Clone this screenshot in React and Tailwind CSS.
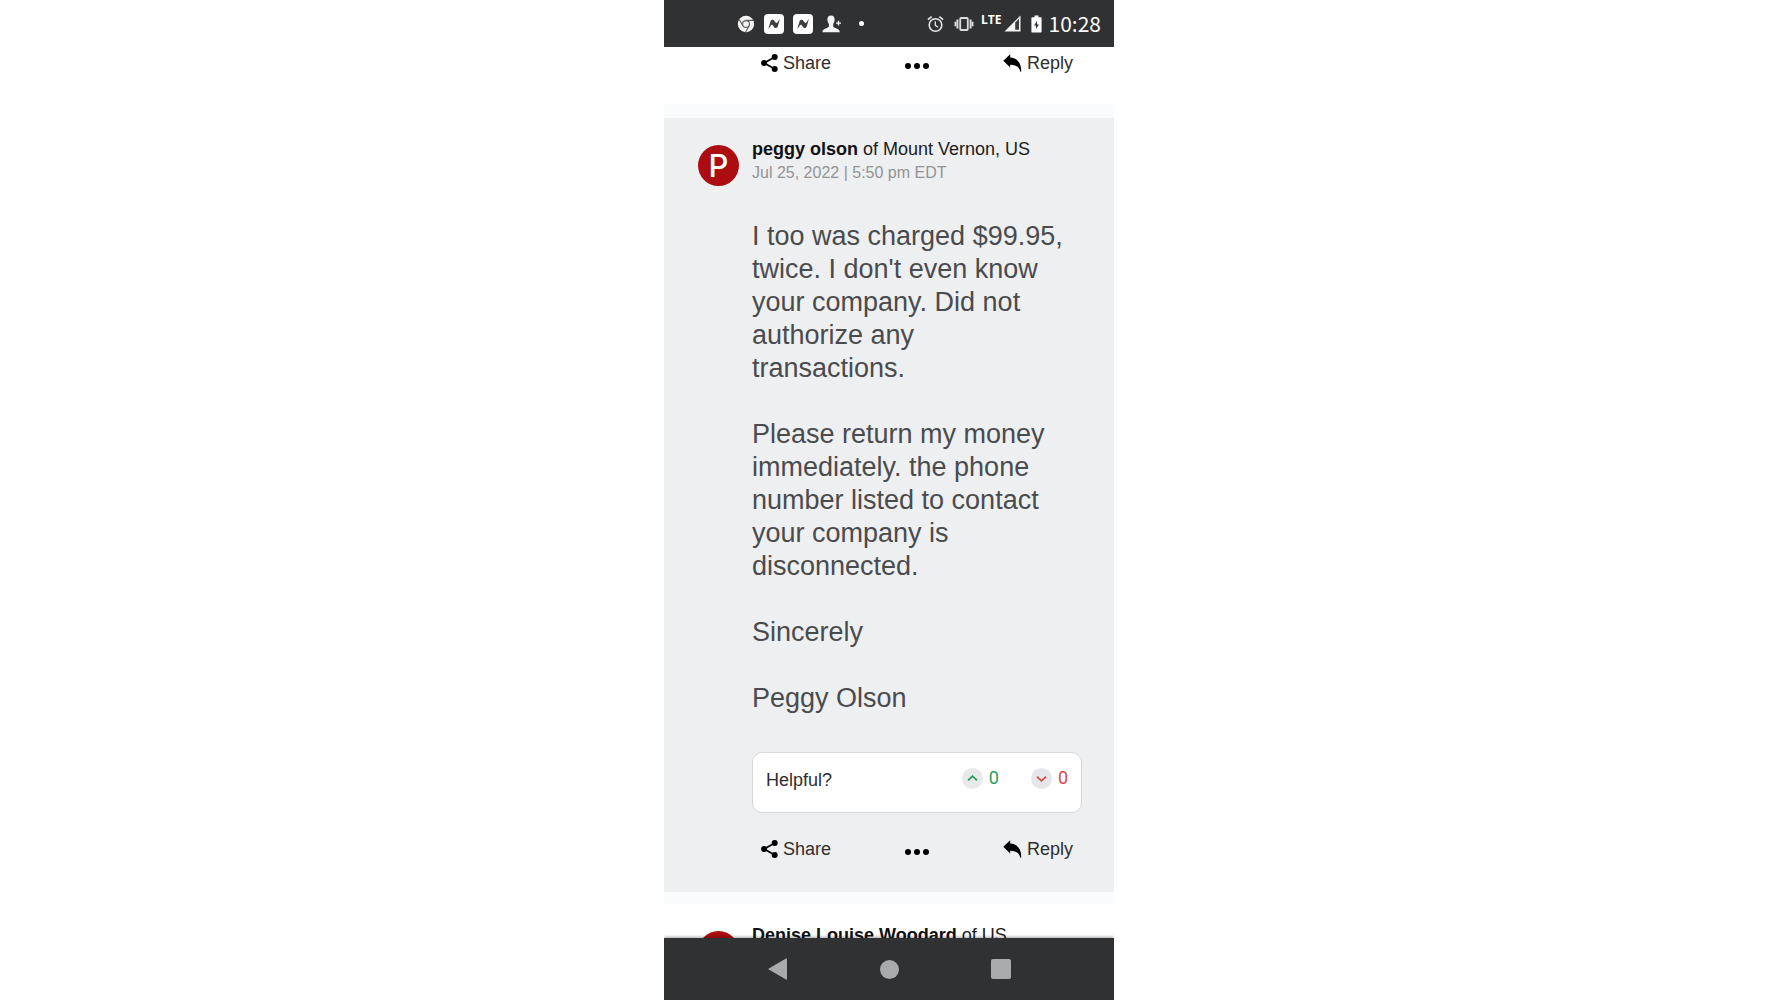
import { useState } from "react";

const comment = {
  name: "peggy olson",
  place: "of Mount Vernon, US",
  date: "Jul 25, 2022 | 5:50 pm EDT",
  paragraphs: [
    "I too was charged $99.95, twice. I don't even know your company. Did not authorize any transactions.",
    "Please return my money immediately. the phone number listed to contact your company is disconnected.",
    "Sincerely",
    "Peggy Olson",
  ],
};

function ChromeIcon() {
  return (
    <svg width="18" height="18" viewBox="0 0 18 18" aria-hidden="true">
      <circle cx="9" cy="9" r="8.2" fill="#f4f4f4" />
      <circle cx="9" cy="9" r="3.4" fill="#f4f4f4" stroke="#5c5d5f" strokeWidth="1.1" />
      <path d="M9 5.4H16.4M5.9 10.8L2.3 4.6M12.1 10.8L8.6 17" stroke="#5c5d5f" strokeWidth="1.1" fill="none" />
    </svg>
  );
}

function NewsIcon() {
  return (
    <svg width="20" height="20" viewBox="0 0 20 20" aria-hidden="true">
      <rect width="20" height="20" rx="4" fill="#fff" />
      <path d="M4.2 15L6.6 7.2C7 5.8 8.6 5.2 9.8 6.2L11.6 8.6C12.6 9.4 13.4 8.6 14 7.4L15.9 4.8L13.8 12.2C13.4 13.8 11.6 14.6 10.4 13.4L8.8 11.2C7.8 10.4 7 11.2 6.4 12.2Z" fill="#3b3c3e" />
    </svg>
  );
}

function PersonAddIcon() {
  return (
    <svg width="20" height="18" viewBox="0 0 20 18" fill="#f4f4f4" aria-hidden="true">
      <path d="M9 0.5C11.6 0.5 12.8 2.3 12.6 4.8C12.5 7 11.7 8.2 11.2 9V11.6C11.4 13.2 17.6 13.2 17.8 17.3H0.4C0.6 13.2 6.7 13.2 6.9 11.6V9C6.3 8.2 5.5 7 5.4 4.8C5.2 2.3 6.4 0.5 9 0.5Z" />
      <path d="M15.8 5.8H17.2V7.4H19V8.8H17.2V10.4H15.8V8.8H14V7.4H15.8Z" />
    </svg>
  );
}

function AlarmIcon() {
  return (
    <svg width="17" height="18" viewBox="0 0 17 18" fill="none" stroke="#e6e6e6" aria-hidden="true">
      <circle cx="8.5" cy="10" r="6.3" strokeWidth="1.6" />
      <path d="M8.3 6.2V10.4L11.2 12.2" strokeWidth="1.3" />
      <path d="M0.9 4.7L4.6 1.6M16.1 4.7L12.4 1.6" strokeWidth="1.7" />
    </svg>
  );
}

function VibrateIcon() {
  return (
    <svg width="20" height="14" viewBox="0 0 20 14" fill="none" stroke="#dcdcdc" aria-hidden="true">
      <rect x="6.2" y="1" width="7.6" height="12" rx="1" strokeWidth="1.8" />
      <path d="M3.4 2.6V11.4M16.6 2.6V11.4" strokeWidth="2" />
      <path d="M1.4 4.8V9.2M18.6 4.8V9.2" strokeWidth="1.8" />
    </svg>
  );
}

function SignalIcon() {
  return (
    <svg width="17" height="17" viewBox="0 0 17 17" aria-hidden="true">
      <path d="M0.5 16.5L16.5 0.5V16.5Z" fill="#f4f4f4" />
      <path d="M11.2 7.6L15 3.8V14.8H11.2Z" fill="#3c3d3f" />
    </svg>
  );
}

function BatteryIcon() {
  return (
    <svg width="11" height="18" viewBox="0 0 11 18" aria-hidden="true">
      <path d="M3.5 0.5H7.5V2.3H9.6C10.2 2.3 10.6 2.7 10.6 3.3V16.5C10.6 17.1 10.2 17.5 9.6 17.5H1.4C0.8 17.5 0.4 17.1 0.4 16.5V3.3C0.4 2.7 0.8 2.3 1.4 2.3H3.5Z" fill="#fff" />
      <path d="M6 6L3 10.5H5V14L8 9.5H6Z" fill="#303133" />
    </svg>
  );
}

function ShareIcon() {
  return (
    <svg width="17" height="18" viewBox="0 0 17 18" aria-hidden="true">
      <path d="M13.7 3L3.2 9L13.7 15" fill="none" stroke="#000" strokeWidth="1.7" />
      <circle cx="13.7" cy="3" r="3" />
      <circle cx="3.1" cy="9" r="3" />
      <circle cx="13.7" cy="15" r="3" />
    </svg>
  );
}

function ReplyIcon() {
  return (
    <svg width="19" height="18" viewBox="0 0 19 18" aria-hidden="true">
      <path d="M0.3 6.7L7.2 0.2V3.5C14.2 3.7 18.6 8.8 18.2 17.8H17.4C16.2 13 13 10.6 7.2 10.7V13.5Z" />
    </svg>
  );
}

function StatusBar() {
  return (
    <header className="flex h-[47px] shrink-0 items-center justify-between bg-[#303133] pr-[13px] pl-[73px] text-white">
      <div className="flex items-center gap-[9px]">
        <ChromeIcon />
        <NewsIcon />
        <NewsIcon />
        <PersonAddIcon />
        <span className="ml-2 size-[5px] rounded-full bg-white" />
      </div>
      <div className="flex items-center">
        <AlarmIcon />
        <span className="ml-[10px]">
          <VibrateIcon />
        </span>
        <span className="ml-[7px] h-5 font-['Open_Sans',sans-serif] text-xs leading-3 font-bold">LTE</span>
        <span className="ml-[2px]">
          <SignalIcon />
        </span>
        <span className="ml-[10px]">
          <BatteryIcon />
        </span>
        <span className="ml-[7px] pb-[2px] font-['Noto_Sans_CJK_SC',sans-serif] text-[21px] leading-6">10:28</span>
      </div>
    </header>
  );
}

function Actions() {
  return (
    <div className="flex h-6 items-center justify-between pr-[9px] pl-[9px] text-lg leading-6 text-[#2e2e2e]">
      <button type="button" className="flex items-center gap-[5px]">
        <ShareIcon />
        Share
      </button>
      <button type="button" aria-label="More" className="flex gap-[3px] pt-[5px]">
        <span className="size-[6px] rounded-full bg-black" />
        <span className="size-[6px] rounded-full bg-black" />
        <span className="size-[6px] rounded-full bg-black" />
      </button>
      <button type="button" className="flex items-center gap-[5px]">
        <ReplyIcon />
        Reply
      </button>
    </div>
  );
}

function Avatar({ letter }) {
  return (
    <div className="mt-2 flex size-[41px] shrink-0 items-center justify-center rounded-full bg-[#ab0d10] font-['Inter',sans-serif] text-[31px] leading-[41px] font-medium text-white">
      {letter}
    </div>
  );
}

function Helpful() {
  const [up, setUp] = useState(0);
  const [down, setDown] = useState(0);

  return (
    <div className="flex h-[61px] items-start justify-between rounded-[10px] border border-[#d5d8db] bg-white pr-[13px] pl-[13px] text-lg leading-6">
      <span className="pt-[15px] text-[#2e2e2e]">Helpful?</span>
      <div className="flex gap-8 pt-[13px] font-['Roboto',sans-serif]">
        <button
          type="button"
          aria-label="Helpful"
          onClick={() => setUp(up + 1)}
          className="flex items-center gap-[6px] text-[#2a9d5c]"
        >
          <svg width="21" height="21" viewBox="0 0 21 21" fill="none" aria-hidden="true">
            <circle cx="10.5" cy="10.5" r="10.5" fill="#e8e9eb" />
            <path d="M6 12.3L10.5 8.2L15 12.3" stroke="currentColor" strokeWidth="1.8" />
          </svg>
          {up}
        </button>
        <button
          type="button"
          aria-label="Not helpful"
          onClick={() => setDown(down + 1)}
          className="flex items-center gap-[6px] text-[#dc4a45]"
        >
          <svg width="21" height="21" viewBox="0 0 21 21" fill="none" aria-hidden="true">
            <circle cx="10.5" cy="10.5" r="10.5" fill="#e6e7eb" />
            <path d="M6 8.7L10.5 12.8L15 8.7" stroke="currentColor" strokeWidth="1.8" />
          </svg>
          {down}
        </button>
      </div>
    </div>
  );
}

function NavBar() {
  return (
    <nav className="z-10 flex h-[62px] shrink-0 items-center justify-center gap-[92px] bg-[#303133] shadow-[0_-1px_3px_rgba(0,0,0,0.35)]">
      <button type="button" aria-label="Back">
        <svg width="20" height="22" viewBox="0 0 20 22" fill="#a9aaac" aria-hidden="true">
          <path d="M0.8 10.4L18 0.5Q19 0 19 1.2V20.8Q19 22 18 21.5L0.8 11.6Q0 11 0.8 10.4Z" />
        </svg>
      </button>
      <button type="button" aria-label="Home" className="size-[19px] rounded-full bg-[#a9aaac]" />
      <button type="button" aria-label="Recent apps" className="size-5 rounded-[2px] bg-[#a9aaac]" />
    </nav>
  );
}

export default function App() {
  return (
    <div className="min-h-screen bg-white">
      <div className="mx-auto flex h-screen w-full max-w-[450px] flex-col overflow-hidden font-['Liberation_Sans',Arial,sans-serif]">
        <StatusBar />

        <main className="min-h-0 flex-1 overflow-hidden">
          <div className="border-b-[14px] border-[#fafbfc] pt-1 pr-8 pb-[29px] pl-[88px]">
            <Actions />
          </div>

          <article className="flex gap-[13px] border-b-[12px] border-[#fafbfc] bg-[#eeeff1] pt-[19px] pr-8 pb-[31px] pl-[34px]">
            <Avatar letter="P" />
            <div className="min-w-0 flex-1">
              <h2 className="text-lg leading-6 text-[#1c1c1c]">
                <strong className="font-bold text-[#111]">{comment.name}</strong> {comment.place}
              </h2>
              <p className="text-base leading-6 text-[#929395]">{comment.date}</p>
              <div className="mt-[35px] flex flex-col gap-[33px] pr-3 text-[27px] leading-[33px] text-[#4a4b4d]">
                {comment.paragraphs.map((text) => (
                  <p key={text}>{text}</p>
                ))}
              </div>
              <div className="mt-[37px] mb-6">
                <Helpful />
              </div>
              <Actions />
            </div>
          </article>

          <article className="flex gap-[13px] pt-[19px] pr-8 pl-[34px]">
            <Avatar />
            <h2 className="text-lg leading-6 text-[#1c1c1c]">
              <strong className="font-bold text-[#111]">Denise Louise Woodard</strong> of US
            </h2>
          </article>
        </main>

        <NavBar />
      </div>
    </div>
  );
}
